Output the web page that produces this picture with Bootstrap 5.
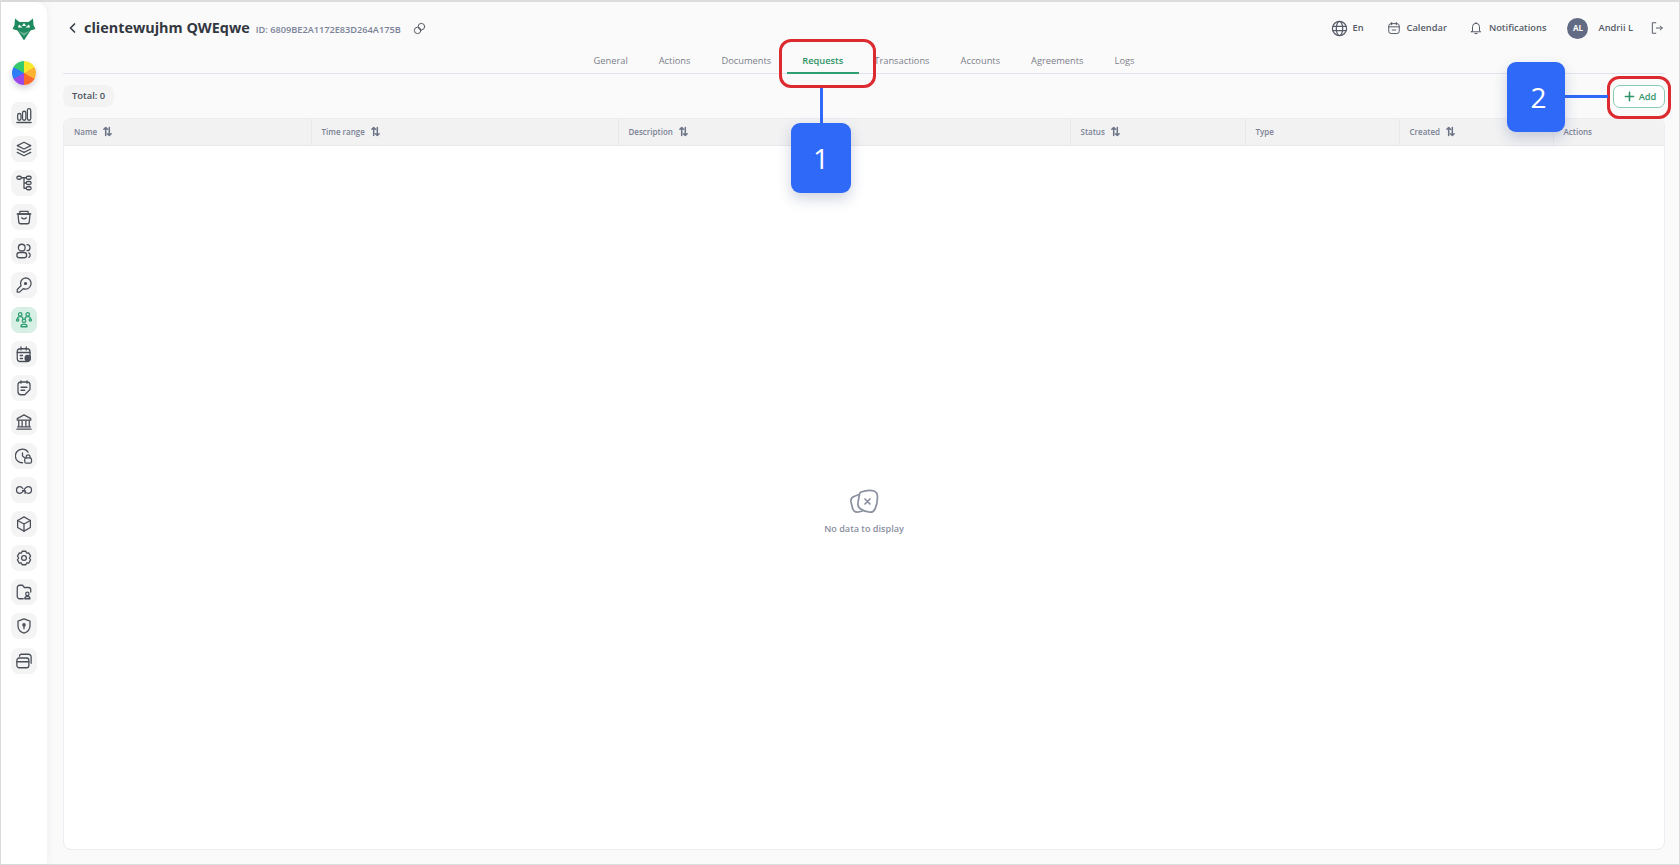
<!DOCTYPE html>
<html lang="en">
<head>
    <meta charset="UTF-8">
    <meta name="viewport" content="width=device-width, initial-scale=1.0">
    <title>Client requests</title>
    <link href="https://cdn.jsdelivr.net/npm/bootstrap@5.3.3/dist/css/bootstrap.min.css" rel="stylesheet">
    <style>
        html, body { height: 100%; }
        body {
            font-family: "Open Sans", "Noto Sans", sans-serif;
            background: #fafafa;
            color: #3a3f4a;
            overflow: hidden;
        }
        .frame {
            height: 865px;
            border: 1px solid #dcdcdc;
            border-top-width: 2px;
            position: relative;
        }
        .sidebar {
            width: 46px;
            flex: none;
            background: #fff;
            border-top-right-radius: 12px;
            box-shadow: 2px 0 6px rgba(60, 70, 100, .05);
            padding-top: 13px;
        }
        .logo { height: 24px; margin-bottom: 22px; }
        .wheel {
            width: 24px;
            height: 24px;
            border-radius: 50%;
            margin-bottom: 17px;
            background: conic-gradient(#f4e92c 0 60deg, #fdb231 60deg 120deg, #fb6a2c 120deg 180deg, #9a48e6 180deg 240deg, #2f7df4 240deg 300deg, #35c96e 300deg 360deg);
            box-shadow: 0 3px 6px rgba(60, 70, 100, .25);
        }
        .side-btn {
            width: 26px;
            height: 26px;
            margin-bottom: 8.1px;
            border-radius: 8px;
            background: #f4f4f4;
            color: #4a4f59;
        }
        .side-btn.active { background: #d8efe5; color: #2f9e72; }
        .side-btn svg { width: 18px; height: 18px; }
        .ico { fill: none; stroke: currentColor; stroke-width: 1.7; stroke-linecap: round; stroke-linejoin: round; }
        .main { min-width: 0; padding: 0 14px 0 16px; }
        .top-row { height: 50px; padding-top: 2px; }
        .back { color: #3a3f4a; margin: 0 5px 0 4px; }
        .client-name { font-size: 14.4px; font-weight: 700; color: #33373f; margin: 0; }
        .client-id { font-size: 9.2px; font-weight: 600; color: #7b8398; margin-left: 6px; padding-top: 3px; }
        .copy-link { color: #4a4f59; margin-left: 12px; }
        .top-item { font-size: 9.3px; font-weight: 600; color: #555b68; }
        .avatar {
            width: 21px;
            height: 21px;
            border-radius: 50%;
            background: #626b84;
            color: #fff;
            font-size: 8px;
            font-weight: 700;
        }
        .tabs {
            height: 22px;
            border-bottom: 1px solid #e1e4ec;
        }
        .tabs .nav-link {
            font-size: 9.3px;
            color: #7a7f8a;
            padding: 2px 15.5px 0;
            height: 22px;
            line-height: 14px;
            border-bottom: 2px solid transparent;
        }
        .tabs .nav-link.active {
            color: #2f9468;
            font-weight: 600;
            border-bottom-color: #2f9e72;
        }
        .toolbar { padding: 11px 0 0; height: 44px; }
        .total-pill {
            background: #f3f3f3;
            border-radius: 8px;
            font-size: 9.4px;
            font-weight: 600;
            color: #4a4f59;
            padding: 0 9px;
            height: 22px;
            line-height: 22px;
        }
        .btn-add {
            width: 52px;
            height: 23px;
            padding: 0 0 0 2px;
            font-size: 9.3px;
            font-weight: 600;
            color: #2f9468;
            background: #fff;
            border: 1px solid #8accb2;
            border-radius: 7px;
        }
        .table-card {
            margin-bottom: 14px;
            border: 1px solid #ececf2;
            border-radius: 8px;
            background: #fff;
            overflow: hidden;
        }
        .data-table { table-layout: fixed; margin: 0; }
        .data-table th {
            background: #f2f2f3;
            height: 26px;
            padding: 0 0 0 10px;
            font-size: 8px;
            font-weight: 600;
            color: #7b8294;
            vertical-align: middle;
            border-bottom: 1px solid #e9e9ed;
            border-right: 1px solid #e9e9ed;
        }
        .data-table th:last-child { border-right: 0; }
        .sort { color: #6c7486; margin-left: 4px; vertical-align: -2px; }
        .empty { padding-top: 30px; }
        .empty-text { font-size: 9.1px; font-weight: 600; color: #8a90a0; margin-top: 5px; }
        .callout-box {
            position: absolute;
            border: 3px solid #dc2b30;
            border-radius: 12px;
            pointer-events: none;
        }
        .callout-num {
            position: absolute;
            background: #2f69f8;
            color: #fff;
            border-radius: 9px;
            font-size: 28px;
            box-shadow: 0 6px 14px rgba(40, 60, 120, .22);
        }
        .num-two { padding-left: 5px; }
        .callout-line { position: absolute; background: #2f69f8; }
    </style>
</head>
<body>
<div class="frame d-flex">
    <aside class="sidebar d-flex flex-column align-items-center">
        <div class="logo">
            <svg width="24" height="24" viewBox="0 0 24 24" fill="#1e8a5e">
                <path d="M3 1.500l4.500 3.500h9L21 1.500l.5 6.500 2 4-5 1.500L12 23.500 5.500 13.500l-5-1.500 2-4z"/>
                <path d="M7 7.500l3.500 3H6zM17 7.500l-3.500 3H18zM12 6l2 3h-4z" fill="#fff"/>
                <path d="M6.500 14l5.500 2 5.500-2-5.500 5z" fill="#fff" opacity=".35"/>
            </svg>
        </div>
        <div class="wheel"></div>

        <div class="side-btn d-flex align-items-center justify-content-center"><svg class="ico" viewBox="0 0 24 24"><rect x="3.500" y="10" width="4.500" height="9" rx="2.200"/><rect x="10" y="7" width="4.500" height="12" rx="2.200"/><rect x="16.500" y="3.500" width="4.500" height="15.500" rx="2.200"/><path d="M2.500 22h19"/></svg></div>
        <div class="side-btn d-flex align-items-center justify-content-center"><svg class="ico" viewBox="0 0 24 24"><path d="M12 3l9 4.500-9 4.500-9-4.500z"/><path d="M3 12l9 4.500 9-4.500"/><path d="M3 16.500L12 21l9-4.500"/></svg></div>
        <div class="side-btn d-flex align-items-center justify-content-center"><svg class="ico" viewBox="0 0 24 24"><rect x="2.500" y="3" width="6" height="4" rx="2"/><rect x="15" y="3" width="6.500" height="4" rx="2"/><rect x="15" y="10" width="6.500" height="4" rx="2"/><rect x="15" y="17" width="6.500" height="4" rx="2"/><path d="M8.500 5H15M12 5v14h3M12 12h3"/></svg></div>
        <div class="side-btn d-flex align-items-center justify-content-center"><svg class="ico" viewBox="0 0 24 24"><path d="M4 8h16l-1 11a2.500 2.500 0 0 1-2.500 2h-9A2.500 2.500 0 0 1 5 19z"/><path d="M3 8h18M6.500 8V4.500h11V8M9 13c1.500 2 4.500 2 6 0"/></svg></div>
        <div class="side-btn d-flex align-items-center justify-content-center"><svg class="ico" viewBox="0 0 24 24"><circle cx="9" cy="7.500" r="4.500"/><rect x="2.500" y="14" width="13" height="7" rx="3.500"/><path d="M16 3.500a4 4 0 0 1 0 8M18.500 14.500a3.500 3.500 0 0 1 0 6"/></svg></div>
        <div class="side-btn d-flex align-items-center justify-content-center"><svg class="ico" viewBox="0 0 24 24"><path d="M14 2.500a7.500 7.500 0 1 1-3 14.400L6 21.500H3V18l5-5a7.500 7.500 0 0 1 6-10.500z"/><circle cx="14" cy="10" r="1.300" fill="currentColor"/></svg></div>
        <div class="side-btn active d-flex align-items-center justify-content-center"><svg class="ico" viewBox="0 0 24 24"><circle cx="7" cy="4.500" r="2.300"/><circle cx="17" cy="4.500" r="2.300"/><circle cx="12" cy="13" r="2.300"/><circle cx="3.500" cy="12" r="1.500"/><circle cx="20.500" cy="12" r="1.500"/><path d="M3.500 10c0-1.500 1.500-2.500 3.500-2.500S10.500 8.500 10.500 10M13.500 10c0-1.500 1.500-2.500 3.500-2.500s3.500 1 3.500 2.500M8 21c0-2 2-3.500 4-3.500s4 1.500 4 3.500z"/></svg></div>
        <div class="side-btn d-flex align-items-center justify-content-center"><svg class="ico" viewBox="0 0 24 24"><rect x="3" y="5" width="17" height="17" rx="4"/><path d="M8 2.500v4M15 2.500v4M3 10h17M7 14h3M7 18h3"/><circle cx="17" cy="17.500" r="3.500" fill="currentColor"/></svg></div>
        <div class="side-btn d-flex align-items-center justify-content-center"><svg class="ico" viewBox="0 0 24 24" stroke-width="2"><path d="M8 4h8a4 4 0 0 1 4 4v6l-7 7H8a4 4 0 0 1-4-4V8a4 4 0 0 1 4-4z"/><path d="M8 2.500v3M16 2.500v3M8 11h8M8 15h5"/></svg></div>
        <div class="side-btn d-flex align-items-center justify-content-center"><svg class="ico" viewBox="0 0 24 24"><path d="M12 2.500L3 7.500v2h18v-2zM5 10v8M9.500 10v8M14.500 10v8M19 10v8M3.500 18.500h17M2.500 21.500h19"/></svg></div>
        <div class="side-btn d-flex align-items-center justify-content-center"><svg class="ico" viewBox="0 0 24 24"><path d="M10 21a9 9 0 0 1-1-18c3.500-.3 6.500 1 8.500 4"/><path d="M10 8v4l2.500 2"/><rect x="13" y="14.500" width="9" height="7" rx="2"/><path d="M15 14.500V13a2.500 2.500 0 0 1 5 0v1.500"/></svg></div>
        <div class="side-btn d-flex align-items-center justify-content-center"><svg class="ico" viewBox="0 0 24 24"><path d="M10.500 10C9.500 8.500 8 7.500 6.500 7.500a4.500 4.500 0 0 0 0 9c2.500 0 4-2 5.500-4.500s3-4.500 5.500-4.500a4.500 4.500 0 0 1 0 9c-1.500 0-3-1-4-2.500"/><path d="M10 13l3.500 0 0 3.500"/></svg></div>
        <div class="side-btn d-flex align-items-center justify-content-center"><svg class="ico" viewBox="0 0 24 24"><path d="M12 2.500l8.500 4.800v9.400L12 21.500l-8.500-4.800V7.300z"/><path d="M12 12l8.500-4.700M12 12L3.500 7.300M12 12v9.500"/></svg></div>
        <div class="side-btn d-flex align-items-center justify-content-center"><svg class="ico" viewBox="0 0 24 24"><path d="M9.500 3h5l1 2.500 2.800-.3 2.500 4.300-1.700 2.500 1.700 2.500-2.500 4.300-2.800-.3-1 2.500h-5l-1-2.500-2.800.3-2.500-4.300L5 12 3.300 9.500l2.500-4.300 2.800.3z"/><circle cx="12" cy="12" r="3.200"/></svg></div>
        <div class="side-btn d-flex align-items-center justify-content-center"><svg class="ico" viewBox="0 0 24 24"><path d="M11 21H6a3 3 0 0 1-3-3V6a3 3 0 0 1 3-3h4l2.500 3H18a3 3 0 0 1 3 3v3"/><circle cx="16.500" cy="14.500" r="2.200"/><path d="M13 21c0-2 1.500-3.300 3.500-3.300S20 19 20 21z"/></svg></div>
        <div class="side-btn d-flex align-items-center justify-content-center"><svg class="ico" viewBox="0 0 24 24"><path d="M12 2.500l8 3v6c0 5-3.500 8.500-8 10-4.500-1.500-8-5-8-10v-6z"/><circle cx="12" cy="10.500" r="1.500" fill="currentColor"/><path d="M12 12v3.500"/></svg></div>
        <div class="side-btn d-flex align-items-center justify-content-center"><svg class="ico" viewBox="0 0 24 24" stroke-width="2.200"><rect x="2.500" y="8" width="16" height="13" rx="3"/><path d="M2.500 13h16M6 5.500C6 4 7 3 8.500 3H18a3.500 3.500 0 0 1 3.500 3.500V15"/></svg></div>
    </aside>

    <main class="main flex-grow-1 d-flex flex-column">
        <div class="top-row d-flex align-items-center">
            <a class="back d-flex" href="#"><svg class="ico" width="12" height="12" viewBox="0 0 12 12"><path d="M7.500 2L3.500 6l4 4"/></svg></a>
            <h1 class="client-name">clientewujhm QWEqwe</h1>
            <span class="client-id">ID: 6809BE2A1172E83D264A175B</span>
            <span class="copy-link d-flex"><svg class="ico" width="13" height="13" viewBox="0 0 24 24" stroke-width="2"><circle cx="15.500" cy="8.500" r="6"/><circle cx="8.500" cy="15.500" r="6"/></svg></span>

            <div class="ms-auto d-flex align-items-center top-item">
                <svg class="ico me-1" width="17" height="17" viewBox="0 0 24 24" stroke-width="1.800"><circle cx="12" cy="12" r="10"/><ellipse cx="12" cy="12" rx="4.500" ry="10"/><path d="M2.500 9h19M2.500 15h19"/></svg>
                <span>En</span>
                <svg class="ico" width="14" height="14" viewBox="0 0 24 24" style="margin-left:23px;margin-right:6px" stroke-width="1.800"><rect x="3" y="4.500" width="18" height="17" rx="4"/><path d="M8 2.500v4M16 2.500v4M3 10h18M9 15.500h6"/></svg>
                <span>Calendar</span>
                <svg class="ico" width="14" height="14" viewBox="0 0 24 24" style="margin-left:22px;margin-right:6px" stroke-width="1.800"><path d="M6 17V10a6 6 0 0 1 12 0v7l2 1.500H4zM10 21.500h4M12 2.500V4"/></svg>
                <span>Notifications</span>
                <span class="avatar d-flex align-items-center justify-content-center" style="margin-left:21px;margin-right:10px">AL</span>
                <span>Andrii L</span>
                <svg class="ico" width="14" height="14" viewBox="0 0 24 24" style="margin-left:17px;margin-right:1px" stroke-width="2"><path d="M10 3H4v18h6M11 12h10M17.500 8.500L21 12l-3.500 3.500"/></svg>
            </div>
        </div>

        <ul class="nav tabs justify-content-center">
            <li class="nav-item"><a class="nav-link" href="#">General</a></li>
            <li class="nav-item"><a class="nav-link" href="#">Actions</a></li>
            <li class="nav-item"><a class="nav-link" href="#">Documents</a></li>
            <li class="nav-item"><a class="nav-link active" href="#">Requests</a></li>
            <li class="nav-item"><a class="nav-link" href="#">Transactions</a></li>
            <li class="nav-item"><a class="nav-link" href="#">Accounts</a></li>
            <li class="nav-item"><a class="nav-link" href="#">Agreements</a></li>
            <li class="nav-item"><a class="nav-link" href="#">Logs</a></li>
        </ul>

        <div class="toolbar d-flex justify-content-between align-items-start">
            <span class="total-pill">Total: 0</span>
            <button class="btn btn-add d-flex align-items-center justify-content-center gap-1" type="button">
                <svg class="ico" width="11" height="11" viewBox="0 0 12 12"><path d="M6 1.500v9M1.500 6h9"/></svg>Add
            </button>
        </div>

        <div class="table-card flex-grow-1 d-flex flex-column">
            <table class="table data-table">
                <colgroup>
                    <col style="width:247px"><col style="width:307px"><col style="width:452px"><col style="width:175px"><col style="width:154px"><col style="width:154px"><col>
                </colgroup>
                <thead>
                    <tr>
                        <th>Name <svg class="ico sort" width="9" height="11" viewBox="0 0 10 11" stroke-width="1"><path d="M3 10V1M1 3l2-2 2 2M7 1v9M5 8l2 2 2-2"/></svg></th>
                        <th>Time range <svg class="ico sort" width="9" height="11" viewBox="0 0 10 11" stroke-width="1"><path d="M3 10V1M1 3l2-2 2 2M7 1v9M5 8l2 2 2-2"/></svg></th>
                        <th>Description <svg class="ico sort" width="9" height="11" viewBox="0 0 10 11" stroke-width="1"><path d="M3 10V1M1 3l2-2 2 2M7 1v9M5 8l2 2 2-2"/></svg></th>
                        <th>Status <svg class="ico sort" width="9" height="11" viewBox="0 0 10 11" stroke-width="1"><path d="M3 10V1M1 3l2-2 2 2M7 1v9M5 8l2 2 2-2"/></svg></th>
                        <th>Type</th>
                        <th>Created <svg class="ico sort" width="9" height="11" viewBox="0 0 10 11" stroke-width="1"><path d="M3 10V1M1 3l2-2 2 2M7 1v9M5 8l2 2 2-2"/></svg></th>
                        <th>Actions</th>
                    </tr>
                </thead>
            </table>
            <div class="empty flex-grow-1 d-flex flex-column align-items-center justify-content-center">
                <svg class="ico" width="30" height="28" viewBox="0 0 30 28" stroke-width="1.300" style="color:#8a90a0">
                    <path d="M10 5.500L5 7.500C2.500 8.500 1.500 10.500 2 13l1.500 6c.8 3 3 4.500 6 4l4-1"/>
                    <path d="M12 3c4-1.500 10-2 13-1 2.500.8 3.500 3 3.500 6 0 4-1 9-2.500 12-1.200 2.500-3.500 3.500-6 3-3-.5-7-2-9-3.500-2-1.500-2.500-3.500-2-6 .5-3 1-6 1.500-8C10.500 4.500 11 3.500 12 3z"/>
                    <path d="M16 10l5 5M21 10l-5 5"/>
                </svg>
                <div class="empty-text">No data to display</div>
            </div>
        </div>
    </main>

    <!-- annotations laid over the screenshot -->
    <div class="callout-box" style="left:778px;top:37px;width:97px;height:49px"></div>
    <div class="callout-line" style="left:819px;top:86px;width:3px;height:36px"></div>
    <div class="callout-num d-flex align-items-center justify-content-center" style="left:790px;top:121px;width:60px;height:70px">1</div>

    <div class="callout-box" style="left:1606px;top:74px;width:64px;height:43px"></div>
    <div class="callout-line" style="left:1560px;top:93px;width:47px;height:3px"></div>
    <div class="callout-num num-two d-flex align-items-center justify-content-center" style="left:1506px;top:60px;width:58px;height:70px">2</div>
</div>
<script src="https://cdn.jsdelivr.net/npm/bootstrap@5.3.3/dist/js/bootstrap.bundle.min.js"></script>
</body>
</html>
